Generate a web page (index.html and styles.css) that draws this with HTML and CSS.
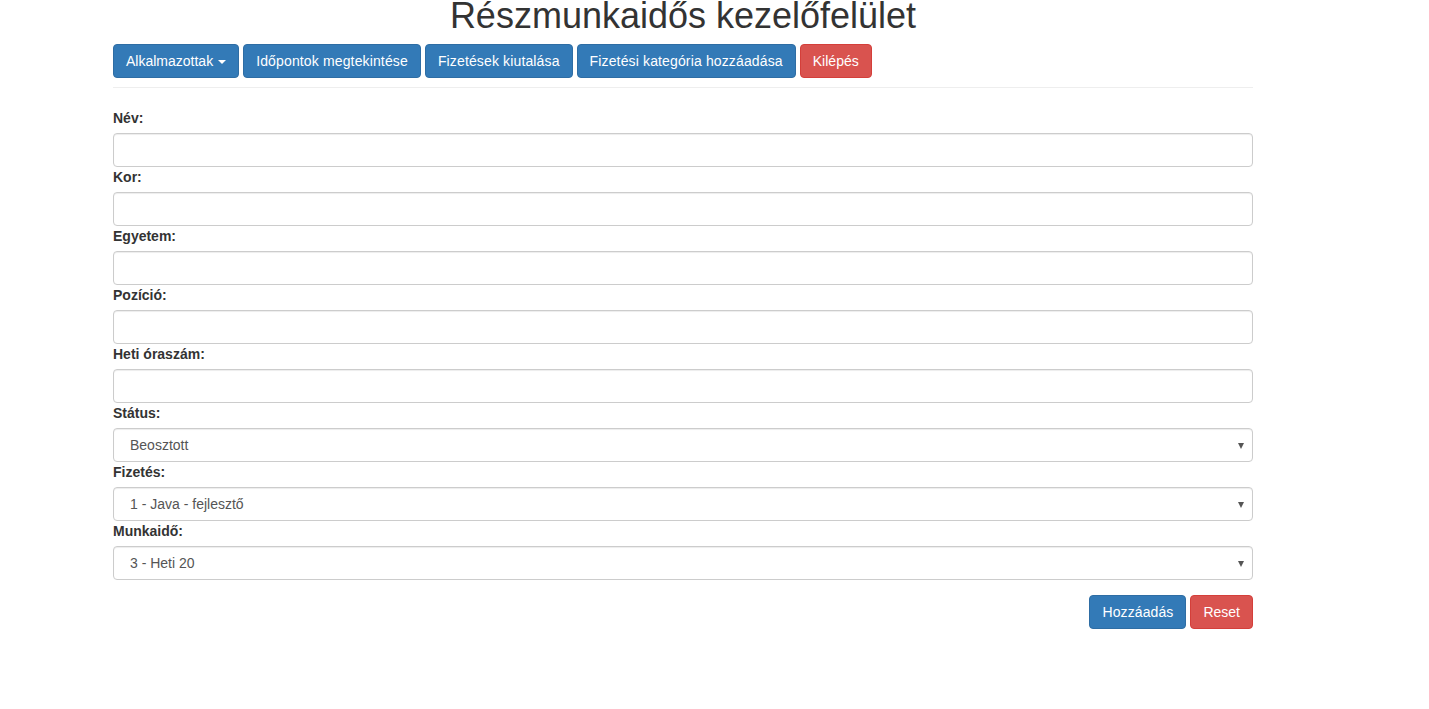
FILE: index.html
```html
<!DOCTYPE html>
<html lang="hu">
<head>
<meta charset="utf-8">
<title>Részmunkaidős kezelőfelület</title>
<link rel="stylesheet" href="styles.css">
</head>
<body>
<div class="container">
  <h1 class="title">Részmunkaidős kezelőfelület</h1>
  <nav class="menu">
    <button class="btn btn-primary btn-drop">Alkalmazottak<span class="caret"></span></button>
    <button class="btn btn-primary">Időpontok megtekintése</button>
    <button class="btn btn-primary">Fizetések kiutalása</button>
    <button class="btn btn-primary">Fizetési kategória hozzáadása</button>
    <button class="btn btn-danger btn-exit">Kilépés</button>
  </nav>
  <hr class="sep">
  <form class="form">
    <label class="lbl">Név:</label>
    <input class="ctrl" type="text">
    <label class="lbl">Kor:</label>
    <input class="ctrl" type="text">
    <label class="lbl">Egyetem:</label>
    <input class="ctrl" type="text">
    <label class="lbl">Pozíció:</label>
    <input class="ctrl" type="text">
    <label class="lbl">Heti óraszám:</label>
    <input class="ctrl" type="text">
    <label class="lbl">Státus:</label>
    <div class="select"><span>Beosztott</span><span class="arrow"></span></div>
    <label class="lbl">Fizetés:</label>
    <div class="select"><span>1 - Java - fejlesztő</span><span class="arrow"></span></div>
    <label class="lbl">Munkaidő:</label>
    <div class="select"><span>3 - Heti 20</span><span class="arrow"></span></div>
    <div class="actions">
      <button type="button" class="btn btn-primary">Hozzáadás</button>
      <button type="button" class="btn btn-danger">Reset</button>
    </div>
  </form>
</div>
</body>
</html>
```
FILE: styles.css
```css
* { box-sizing: border-box; }
html, body { margin: 0; padding: 0; background: #fff; }
body {
  font-family: "Liberation Sans", Arial, Helvetica, sans-serif;
  font-size: 14px;
  line-height: 20px;
  color: #333;
}
.container {
  width: 1170px;
  padding: 0 15px;
  margin-left: 98px;
}
.title {
  margin: 0;
  font-size: 36px;
  font-weight: 500;
  line-height: 32px;
  text-align: center;
  color: #333;
}
.menu {
  display: flex;
  gap: 4px;
  margin-top: 12px;
}
.btn {
  display: inline-flex;
  align-items: center;
  height: 34px;
  padding: 6px 12px;
  font-family: inherit;
  font-size: 14px;
  line-height: 20px;
  border: 1px solid transparent;
  border-radius: 4px;
  color: #fff;
  cursor: pointer;
  white-space: nowrap;
}
.menu .btn { letter-spacing: 0.14px; }
.menu .btn-exit, .menu .btn-drop { letter-spacing: 0; }
.btn-primary { background: #337ab7; border-color: #2e6da4; }
.btn-danger { background: #d9534f; border-color: #d43f3a; }
.caret {
  display: inline-block;
  width: 0; height: 0;
  margin-left: 5px;
  margin-top: 2px;
  border-top: 4px solid #fff;
  border-left: 4px solid transparent;
  border-right: 4px solid transparent;
}
.sep {
  margin: 9px 0 20px;
  border: 0;
  border-top: 1px solid #eee;
}
.form { display: flex; flex-direction: column; }
.lbl {
  display: block;
  font-weight: bold;
  margin-bottom: 5px;
  line-height: 20px;
}
.ctrl, .select {
  display: block;
  width: 100%;
  height: 34px;
  padding: 6px 16px;
  font-family: inherit;
  font-size: 14px;
  color: #555;
  background: #fff;
  border: 1px solid #ccc;
  border-radius: 4px;
  box-shadow: inset 0 1px 1px rgba(0,0,0,.075);
}
.select {
  display: flex;
  align-items: center;
  justify-content: space-between;
  padding: 6px 8px 6px 16px;
}
.arrow {
  width: 0; height: 0;
  border-top: 6px solid #555;
  border-left: 3px solid transparent;
  border-right: 3px solid transparent;
  margin-top: 1px;
}
.actions {
  display: flex;
  justify-content: flex-end;
  gap: 4px;
  margin-top: 15px;
}
.actions .btn:first-child { letter-spacing: 0.1px; }
```
